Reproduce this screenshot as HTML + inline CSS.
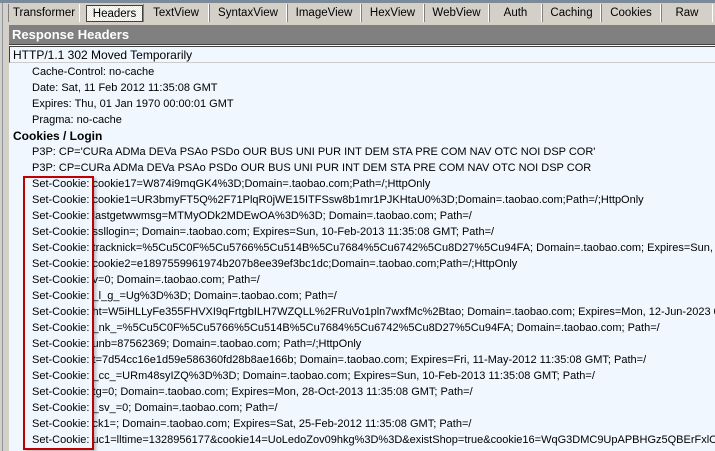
<!DOCTYPE html>
<html><head><style>
*{margin:0;padding:0;box-sizing:border-box}
body{width:715px;height:451px;overflow:hidden;background:#d4d0c8;font-family:"Liberation Sans","DejaVu Sans",sans-serif;font-size:11px;color:#000;position:relative}
.top{position:absolute;left:0;top:0;width:715px;height:3px;background:#7b8a99}
.lstrip{position:absolute;left:2px;top:3px;width:1px;height:448px;background:#8a96a2}
.tab{position:absolute;top:4px;height:18px;line-height:18px;text-align:center;border-right:1px solid #fff;border-left:1px solid #808080;font-size:11.5px}
.tab.sel{background:repeating-conic-gradient(#e8e6e0 0 25%,#fff 0 50%) 0 0/2px 2px;border:1px solid #404040;top:5px;height:17px;line-height:16px}
.bar{position:absolute;left:9px;top:25px;width:706px;height:20px;background:#808080;color:#fff;font-weight:bold;font-size:13px;line-height:20px;padding-left:3px;border-bottom:1px solid #404040}
.content{position:absolute;left:9px;top:45px;width:706px;height:406px;background:#f0f7ff;overflow:hidden}
.http{position:absolute;left:0;top:1px;width:706px;height:17px;border-top:1px solid #404040;border-left:1px solid #404040;border-bottom:1px solid #ccc;font-size:12px;line-height:16px;padding-left:3px;background:#f0f7ff;white-space:nowrap}
.row{position:absolute;left:23px;white-space:nowrap;height:16px;line-height:16px}
.b{left:4px;font-weight:bold;font-size:12px}
.red{position:absolute;left:14px;top:131px;width:71px;height:274px;border:2px solid #c00000;box-shadow:2px 2px 3px rgba(0,0,0,.25)}
</style></head><body>
<div class="top"></div>
<div class="lstrip"></div>
<div class="tab" style="left:8px;width:72px">Transformer</div>
<div class="tab sel" style="left:86px;width:57px">Headers</div>
<div class="tab" style="left:143px;width:66px">TextView</div>
<div class="tab" style="left:209px;width:78px">SyntaxView</div>
<div class="tab" style="left:287px;width:74px">ImageView</div>
<div class="tab" style="left:361px;width:63px">HexView</div>
<div class="tab" style="left:424px;width:65px">WebView</div>
<div class="tab" style="left:489px;width:53px">Auth</div>
<div class="tab" style="left:542px;width:59px">Caching</div>
<div class="tab" style="left:601px;width:60px">Cookies</div>
<div class="tab" style="left:661px;width:52px">Raw</div>
<div class="bar">Response Headers</div>
<div class="content">
<div class="http">HTTP/1.1 302 Moved Temporarily</div>
<div class="row" style="top:19px">Cache-Control: no-cache</div>
<div class="row" style="top:35px">Date: Sat, 11 Feb 2012 11:35:08 GMT</div>
<div class="row" style="top:51px">Expires: Thu, 01 Jan 1970 00:00:01 GMT</div>
<div class="row" style="top:67px">Pragma: no-cache</div>
<div class="row b" style="top:83px">Cookies / Login</div>
<div class="row" style="top:99px">P3P: CP='CURa ADMa DEVa PSAo PSDo OUR BUS UNI PUR INT DEM STA PRE COM NAV OTC NOI DSP COR'</div>
<div class="row" style="top:115px">P3P: CP=CURa ADMa DEVa PSAo PSDo OUR BUS UNI PUR INT DEM STA PRE COM NAV OTC NOI DSP COR</div>
<div class="row" style="top:131px">Set-Cookie: cookie17=W874i9mqGK4%3D;Domain=.taobao.com;Path=/;HttpOnly</div>
<div class="row" style="top:147px">Set-Cookie: cookie1=UR3bmyFT5Q%2F71PlqR0jWE15ITFSsw8b1mr1PJKHtaU0%3D;Domain=.taobao.com;Path=/;HttpOnly</div>
<div class="row" style="top:163px">Set-Cookie: lastgetwwmsg=MTMyODk2MDEwOA%3D%3D; Domain=.taobao.com; Path=/</div>
<div class="row" style="top:179px">Set-Cookie: ssllogin=; Domain=.taobao.com; Expires=Sun, 10-Feb-2013 11:35:08 GMT; Path=/</div>
<div class="row" style="top:195px">Set-Cookie: tracknick=%5Cu5C0F%5Cu5766%5Cu514B%5Cu7684%5Cu6742%5Cu8D27%5Cu94FA; Domain=.taobao.com; Expires=Sun, 10-Feb-2013</div>
<div class="row" style="top:211px">Set-Cookie: cookie2=e1897559961974b207b8ee39ef3bc1dc;Domain=.taobao.com;Path=/;HttpOnly</div>
<div class="row" style="top:227px">Set-Cookie: v=0; Domain=.taobao.com; Path=/</div>
<div class="row" style="top:243px">Set-Cookie: _l_g_=Ug%3D%3D; Domain=.taobao.com; Path=/</div>
<div class="row" style="top:259px">Set-Cookie: ht=W5iHLLyFe355FHVXI9qFrtgbILH7WZQLL%2FRuVo1pln7wxfMc%2Btao; Domain=.taobao.com; Expires=Mon, 12-Jun-2023 04:22:00 GMT</div>
<div class="row" style="top:275px">Set-Cookie: _nk_=%5Cu5C0F%5Cu5766%5Cu514B%5Cu7684%5Cu6742%5Cu8D27%5Cu94FA; Domain=.taobao.com; Path=/</div>
<div class="row" style="top:291px">Set-Cookie: unb=87562369; Domain=.taobao.com; Path=/;HttpOnly</div>
<div class="row" style="top:307px">Set-Cookie: t=7d54cc16e1d59e586360fd28b8ae166b; Domain=.taobao.com; Expires=Fri, 11-May-2012 11:35:08 GMT; Path=/</div>
<div class="row" style="top:323px">Set-Cookie: _cc_=URm48syIZQ%3D%3D; Domain=.taobao.com; Expires=Sun, 10-Feb-2013 11:35:08 GMT; Path=/</div>
<div class="row" style="top:339px">Set-Cookie: tg=0; Domain=.taobao.com; Expires=Mon, 28-Oct-2013 11:35:08 GMT; Path=/</div>
<div class="row" style="top:355px">Set-Cookie: _sv_=0; Domain=.taobao.com; Path=/</div>
<div class="row" style="top:371px">Set-Cookie: ck1=; Domain=.taobao.com; Expires=Sat, 25-Feb-2012 11:35:08 GMT; Path=/</div>
<div class="row" style="top:387px">Set-Cookie: uc1=lltime=1328956177&amp;cookie14=UoLedoZov09hkg%3D%3D&amp;existShop=true&amp;cookie16=WqG3DMC9UpAPBHGz5QBErFxlCA%3D</div>
<div class="red"></div>
</div>
</body></html>
